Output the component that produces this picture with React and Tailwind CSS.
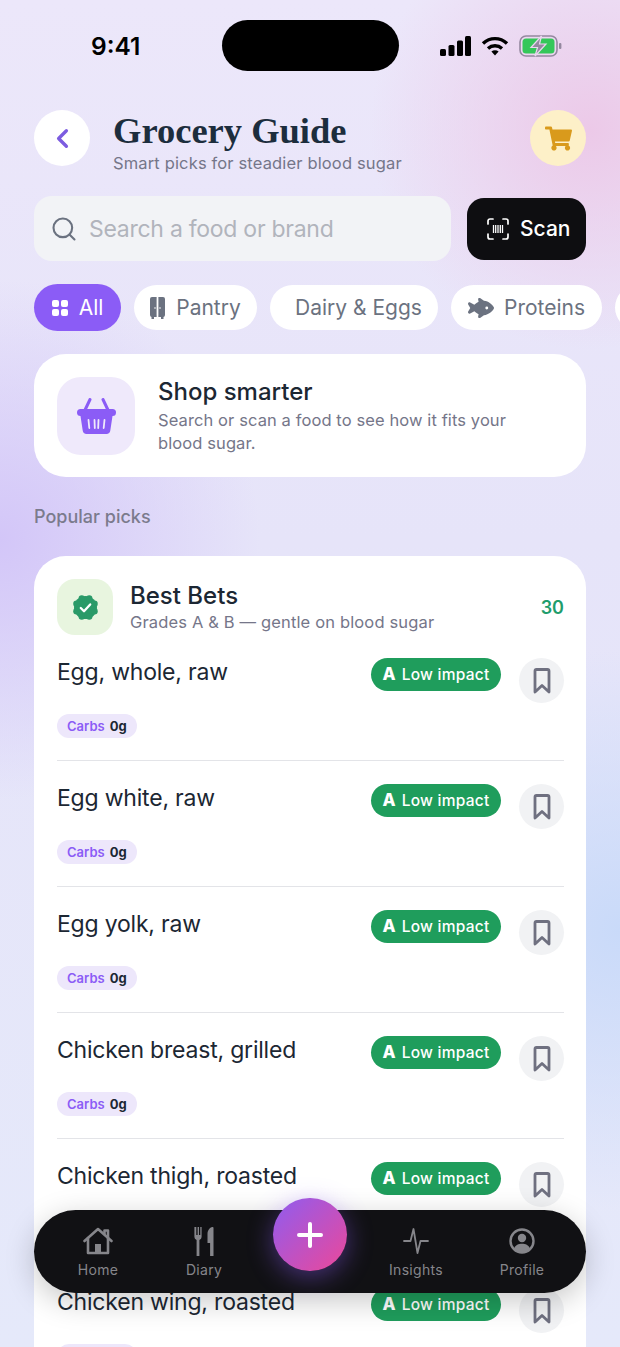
import React from 'react';
import { ChevronLeft, Search } from 'lucide-react';
import { FaShoppingCart } from 'react-icons/fa';
import { FaFishFins } from 'react-icons/fa6';

const foods = [
  'Egg, whole, raw',
  'Egg white, raw',
  'Egg yolk, raw',
  'Chicken breast, grilled',
  'Chicken thigh, roasted',
  'Chicken wing, roasted',
];

const StatusIcons = () => (
  <div className="flex items-center gap-[10px]">
    <svg width="31" height="20" viewBox="0 0 31 20" fill="#000">
      <rect x="0" y="13" width="6" height="7" rx="1.5" />
      <rect x="8.5" y="9" width="6" height="11" rx="1.5" />
      <rect x="17" y="4.5" width="6" height="15.5" rx="1.5" />
      <rect x="25" y="0" width="6" height="20" rx="1.5" />
    </svg>
    <svg width="28" height="20" viewBox="0 0 28 20" fill="none" stroke="#000" strokeWidth="3.4">
      <path d="M2 7.5C9 1 19 1 26 7.5" />
      <path d="M7 12.5c4-3.6 10-3.6 14 0" />
      <path d="M14 19.5l-3.6-4c2-1.6 5.2-1.6 7.2 0z" fill="#000" stroke="none" />
    </svg>
    <svg width="44" height="22" viewBox="0 0 44 22">
      <rect x="1" y="1" width="37" height="20" rx="6" fill="none" stroke="#94889f" strokeWidth="1.6" />
      <rect x="3.5" y="3.5" width="32" height="15" rx="3.5" fill="#34c759" />
      <rect x="40" y="8" width="2.4" height="6" rx="1" fill="#94889f" />
      <path d="M22.5 1 12 12.5h6.5L16 21l11-12h-6.5z" fill="#94889f" stroke="#ead8ef" strokeWidth="1.2" />
    </svg>
  </div>
);

const GridIcon = () => (
  <svg width="16" height="16" viewBox="0 0 16 16" fill="#fff">
    <rect x="0" y="0" width="7" height="7" rx="2" />
    <rect x="9" y="0" width="7" height="7" rx="2" />
    <rect x="0" y="9" width="7" height="7" rx="2" />
    <rect x="9" y="9" width="7" height="7" rx="2" />
  </svg>
);

const PantryIcon = () => (
  <svg width="15" height="22" viewBox="0 0 15 22" fill="#6b7280">
    <path d="M0 2a2 2 0 0 1 2-2h4.600v20H2a2 2 0 0 1-2-2z" />
    <path d="M8.400 0H13a2 2 0 0 1 2 2v16a2 2 0 0 1-2 2H8.400z" />
    <rect x="1.500" y="19" width="2.500" height="3" />
    <rect x="11" y="19" width="2.500" height="3" />
    <circle cx="5" cy="11" r=".8" fill="#fff" />
    <circle cx="10" cy="11" r=".8" fill="#fff" />
  </svg>
);

const BarcodeIcon = () => (
  <svg width="22" height="22" viewBox="0 0 22 22" fill="none" stroke="#fff" strokeWidth="1.7" strokeLinecap="round">
    <path d="M1 6V3a2 2 0 0 1 2-2h3M16 1h3a2 2 0 0 1 2 2v3M21 16v3a2 2 0 0 1-2 2h-3M6 21H3a2 2 0 0 1-2-2v-3" />
    <path d="M6.500 7v8M8.700 7v8M11 7v8M13.300 7v8M15.500 7v8" strokeWidth="1.3" strokeLinecap="butt" />
  </svg>
);

const BasketIcon = () => (
  <svg width="39" height="36" viewBox="0 0 39 36" fill="#8b5cf6">
    <path d="M13 1.500 8 12M26 1.500l5 10.500" stroke="#8b5cf6" strokeWidth="3" strokeLinecap="round" fill="none" />
    <rect x="0" y="11" width="39" height="7" rx="3.500" />
    <path d="M3.500 18h32l-2.200 14.500a4 4 0 0 1-4 3.500H9.700a4 4 0 0 1-4-3.500z" />
    <path d="M11.500 22l.8 8M17.500 22l.3 8M21.500 22l-.3 8M27.500 22l-.8 8" stroke="#efe9fb" strokeWidth="1.800" strokeLinecap="round" fill="none" />
  </svg>
);

// Eight-lobed seal with a check mark
const SealIcon = () => {
  const lobes = [0, 45, 90, 135, 180, 225, 270, 315];
  return (
    <svg width="27" height="27" viewBox="0 0 27 27">
      <circle cx="13.500" cy="13.500" r="11.500" fill="#2a9a68" />
      {lobes.map((a) => (
        <circle
          key={a}
          cx={13.500 + 9.800 * Math.cos((a + 22.5) * Math.PI / 180)}
          cy={13.500 + 9.800 * Math.sin((a + 22.5) * Math.PI / 180)}
          r="3.200"
          fill="#2a9a68"
        />
      ))}
      <path d="M8.800 14l3.200 3.200 6.200-6.800" fill="none" stroke="#fff" strokeWidth="2.300" strokeLinecap="round" strokeLinejoin="round" />
    </svg>
  );
};

const BookmarkIcon = () => (
  <svg width="18" height="26" viewBox="0 0 18 26" fill="none" stroke="#6f7080" strokeWidth="2.800" strokeLinejoin="round">
    <path d="M2 3a1.500 1.500 0 0 1 1.500-1.500h11A1.500 1.500 0 0 1 16 3v21l-7-6.500L2 24z" />
  </svg>
);

const HomeIcon = () => (
  <svg width="30" height="28" viewBox="0 0 30 28" fill="none" stroke="#86868b" strokeWidth="2.600" strokeLinejoin="round" strokeLinecap="round">
    <path d="M1.500 14 15 2l13.500 12" />
    <path d="M5 11v15h20V11" />
    <path d="M21.500 7V3.500H25v7" />
    <rect x="12" y="17" width="6" height="9" fill="#86868b" stroke="none" />
  </svg>
);

const DiaryIcon = () => (
  <svg width="20" height="29" viewBox="0 0 20 29" fill="#86868b">
    <path d="M1 0h1.300v8H3.600V0h1.400v8h1.300V0h1.300v10a3 3 0 0 1-2.200 2.900V29H2.600V12.900A3 3 0 0 1 .4 10V0z" />
    <path d="M13.500 16V7c0-3.500 2-6.500 5-7 .6 0 1 .4 1 1v28h-3.400V16z" />
  </svg>
);

const PulseIcon = () => (
  <svg width="26" height="28" viewBox="0 0 26 28" fill="none" stroke="#86868b" strokeWidth="1.800" strokeLinejoin="round" strokeLinecap="round">
    <path d="M1 14h6.500l3-12 4 24 3-12h7.500" />
  </svg>
);

const ProfileIcon = () => (
  <svg width="26" height="26" viewBox="0 0 26 26">
    <circle cx="13" cy="13" r="11.500" fill="none" stroke="#86868b" strokeWidth="2.400" />
    <circle cx="13" cy="10" r="4.200" fill="#86868b" />
    <path d="M5 20.500c1.500-3.500 4.500-4.700 8-4.700s6.500 1.200 8 4.700A11 11 0 0 1 13 24.500a11 11 0 0 1-8-4z" fill="#86868b" />
  </svg>
);

const Chip = ({ icon, label, className }) => (
  <div className={`flex h-[45px] shrink-0 items-center rounded-full bg-white ${className}`}>
    {icon}
    <span className="text-[21px] font-normal text-[#6b7280]">{label}</span>
  </div>
);

const FoodRow = ({ name, last }) => (
  <div className={`pb-[22px] ${last ? '' : 'mb-[23px] border-b border-[#e3e4e8]'}`}>
    <div className="flex items-start">
      <div className="flex-1 text-[23px] leading-[29px] tracking-[-0.2px] text-[#1c2733]">{name}</div>
      <div className="flex h-[33px] w-[130px] items-center justify-center gap-[6px] rounded-full bg-[#1f9d5c] text-white">
        <span className="text-[17px] font-extrabold">A</span>
        <span className="text-[15.5px] font-medium tracking-[0.25px]">Low impact</span>
      </div>
      <div className="ml-[18px] flex h-[45px] w-[45px] items-center justify-center rounded-full bg-[#f1f2f4]">
        <BookmarkIcon />
      </div>
    </div>
    <div className="mt-[11px] inline-flex h-[24px] items-center gap-[5px] rounded-full bg-[#ede7fb] px-[10px] text-[13px] leading-[16px]">
      <span className="font-semibold text-[#8b5cf6]">Carbs</span>
      <span className="font-bold text-[#1c2733]">0g</span>
    </div>
  </div>
);

const NavItem = ({ icon, label }) => (
  <div className="flex w-[106px] flex-col items-center">
    <div className="flex h-[30px] items-center justify-center">{icon}</div>
    <span className="mt-[3px] text-[14px] tracking-[0.3px] text-[#86868b]">{label}</span>
  </div>
);

export default function App() {
  return (
    <div className="relative h-[1347px] w-[620px] overflow-hidden bg-[radial-gradient(circle_at_590px_130px,#ecc9e8_0,rgba(236,201,232,0)_220px),radial-gradient(circle_at_0_540px,#d3c6f8_0,rgba(211,198,248,0)_260px),radial-gradient(circle_at_620px_930px,#c9daf9_0,rgba(201,218,249,0)_280px),linear-gradient(180deg,#ece7fa_0%,#e6e4f9_40%,#e5e9fa_100%)] font-['Inter',sans-serif]">
      {/* Status bar */}
      <div className="flex h-[71px] items-start pt-[20px]">
        <div className="w-[222px] pl-[91px] pt-[8px] text-[24.5px] leading-[36px] font-semibold text-black">9:41</div>
        <div className="h-[51px] w-[177px] rounded-full bg-black" />
        <div className="flex flex-1 justify-end pr-[57px] pt-[15px]"><StatusIcons /></div>
      </div>

      <div className="px-[34px] pt-[39px]">
        {/* Header */}
        <div className="flex h-[56px] items-start">
          <div className="flex h-[56px] w-[56px] items-center justify-center rounded-full bg-white">
            <ChevronLeft size={31} strokeWidth={2.600} color="#7c5ce0" />
          </div>
          <div className="-mt-[1px] ml-[23px] flex-1">
            <h1 className="font-['Liberation_Serif',serif] text-[36.5px] leading-[44px] font-bold text-[#1c2d3d]">Grocery Guide</h1>
            <p className="text-[16.5px] leading-[20px] tracking-[0.15px] text-[#757689]">Smart picks for steadier blood sugar</p>
          </div>
          <div className="flex h-[56px] w-[56px] items-center justify-center rounded-full bg-[#fdf0c8]">
            <FaShoppingCart size={27} color="#d99a1c" />
          </div>
        </div>

        {/* Search and scan */}
        <div className="mt-[30px] flex items-center">
          <div className="flex h-[65px] w-[417px] items-center rounded-[18px] bg-[#f2f3f6] pl-[16px]">
            <Search size={28} strokeWidth={1.800} color="#6b7280" />
            <span className="ml-[11px] pt-[1px] text-[23px] tracking-[-0.27px] text-[#b1b4bc]">Search a food or brand</span>
          </div>
          <div className="ml-[16px] flex h-[62px] w-[119px] items-center gap-[11px] rounded-[17px] bg-[#0e0e11] pl-[20px] text-white">
            <BarcodeIcon />
            <span className="text-[21px] font-medium">Scan</span>
          </div>
        </div>

        {/* Category chips */}
        <div className="mt-[23px] flex w-[620px] items-center gap-[13px]">
          <div className="flex h-[47px] w-[87px] shrink-0 items-center justify-center gap-[11px] rounded-full bg-[#8b5cf6] text-white">
            <GridIcon />
            <span className="text-[21px] font-normal">All</span>
          </div>
          <Chip className="w-[123px] justify-center gap-[11px]" icon={<PantryIcon />} label="Pantry" />
          <Chip className="w-[168px] pl-[25px]" label="Dairy & Eggs" />
          <Chip className="w-[151px] justify-center gap-[10px]" icon={<FaFishFins size={26} color="#6b7280" />} label="Proteins" />
          <Chip className="w-[60px]" />
        </div>

        {/* Intro card */}
        <div className="mt-[23px] flex h-[123px] items-center rounded-[32px] bg-white pl-[23px]">
          <div className="flex h-[78px] w-[78px] items-center justify-center rounded-[24px] bg-[#efe9fb]">
            <BasketIcon />
          </div>
          <div className="ml-[23px] pt-[1px]">
            <div className="text-[24px] leading-[30px] font-medium text-[#1c2733]">Shop smarter</div>
            <p className="mt-[2px] w-[370px] text-[16.5px] leading-[23px] tracking-[0.1px] text-[#757689]">Search or scan a food to see how it fits your blood sugar.</p>
          </div>
        </div>

        <div className="mt-[28px] text-[18px] leading-[24px] font-medium text-[#7b7b8d]">Popular picks</div>

        {/* Best bets list */}
        <div className="mt-[27px] rounded-[32px] bg-white pl-[23px] pr-[22px] pt-[23px]">
          <div className="flex items-center">
            <div className="flex h-[56px] w-[56px] items-center justify-center rounded-[18px] bg-[#e8f5df]">
              <SealIcon />
            </div>
            <div className="ml-[17px] flex-1">
              <div className="text-[24px] leading-[30px] font-medium text-[#1c2733]">Best Bets</div>
              <div className="text-[16.5px] leading-[22px] tracking-[0.15px] text-[#757689]">Grades A &amp; B — gentle on blood sugar</div>
            </div>
            <span className="text-[18px] font-semibold text-[#1f9d6c]">30</span>
          </div>
          <div className="mt-[23px]">
            {foods.map((f, i) => <FoodRow key={f} name={f} last={i === foods.length - 1} />)}
          </div>
        </div>
      </div>

      {/* Bottom tab bar */}
      <div className="absolute left-[34px] top-[1210px] flex h-[83px] w-[552px] items-center justify-between rounded-[42px] bg-[#111114] px-[11px] pt-[3px] shadow-[0_8px_30px_rgba(0,0,0,0.22)]">
        <div className="flex">
          <NavItem icon={<HomeIcon />} label="Home" />
          <NavItem icon={<DiaryIcon />} label="Diary" />
        </div>
        <div className="flex">
          <NavItem icon={<PulseIcon />} label="Insights" />
          <NavItem icon={<ProfileIcon />} label="Profile" />
        </div>
      </div>
      <div className="absolute left-[273px] top-[1198px] flex h-[73px] w-[74px] items-center justify-center rounded-full bg-[linear-gradient(135deg,#8f5cf0,#ec4899)] shadow-[0_6px_26px_rgba(139,92,246,0.45)]">
        <svg width="26" height="26" viewBox="0 0 26 26" stroke="#fff" strokeWidth="4" strokeLinecap="round">
          <path d="M13 2v22M2 13h22" />
        </svg>
      </div>
    </div>
  );
}
